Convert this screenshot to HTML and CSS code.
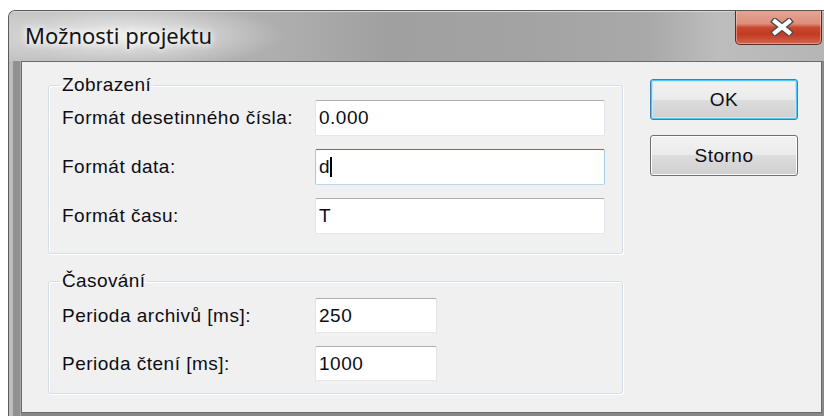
FILE: index.html
```html
<!DOCTYPE html>
<html lang="cs">
<head>
<meta charset="utf-8">
<title>Možnosti projektu</title>
<link rel="stylesheet" href="styles.css">
</head>
<body>
<div class="window">
  <div class="titlebar">
    <span class="title">Možnosti projektu</span>
    <button class="close" type="button" aria-label="Zavřít">
      <svg width="24" height="18" viewBox="0 0 24 18" aria-hidden="true">
        <path d="M5 3.5 L19 14.5 M19 3.5 L5 14.5" stroke="#4d4d4d" stroke-width="7" stroke-linecap="square" fill="none"/>
        <path d="M5 3.5 L19 14.5 M19 3.5 L5 14.5" stroke="#ffffff" stroke-width="4.2" stroke-linecap="square" fill="none"/>
      </svg>
    </button>
  </div>
  <div class="client">
    <div class="groups">
      <fieldset class="group group-display">
        <legend>Zobrazení</legend>
        <div class="row"><span class="label">Formát desetinného čísla:</span><span class="field field-wide">0.000</span></div>
        <div class="row"><span class="label">Formát data:</span><span class="field field-wide field-focus">d<span class="caret"></span></span></div>
        <div class="row"><span class="label">Formát času:</span><span class="field field-wide">T</span></div>
      </fieldset>
      <fieldset class="group group-timing">
        <legend>Časování</legend>
        <div class="row"><span class="label">Perioda archivů [ms]:</span><span class="field field-short">250</span></div>
        <div class="row"><span class="label">Perioda čtení [ms]:</span><span class="field field-short">1000</span></div>
      </fieldset>
    </div>
    <div class="buttons">
      <button class="btn btn-default" type="button">OK</button>
      <button class="btn" type="button">Storno</button>
    </div>
  </div>
</div>
</body>
</html>
```
FILE: styles.css
```css
* {
  box-sizing: border-box;
}

html,
body {
  margin: 0;
}

body {
  width: 824px;
  height: 416px;
  overflow: hidden;
  background: #ffffff;
  font-family: "Liberation Sans", Arial, sans-serif;
  color: #0d0d14;
}

/* window frame */
.window {
  margin: 10px 0 0 8px;
  width: 818px;
  height: 410px;
  border-top: 1px solid #5a5a5a;
  border-left: 1px solid #5a5a5a;
  border-top-left-radius: 7px;
  overflow: hidden;
  display: flex;
  flex-direction: column;
  background:
    linear-gradient(to right, #bdbdbd 0, #bdbdbd 4px, #919191 4px, #919191 11px, #a9a9a9 11px, #a9a9a9 12px, transparent 12px) no-repeat,
    #878787;
}

.titlebar {
  height: 50px;
  flex: none;
  display: flex;
  align-items: flex-start;
  background:
    radial-gradient(ellipse 160px 34px at 115px 24px, rgba(240, 240, 240, 0.95), rgba(240, 240, 240, 0) 100%),
    linear-gradient(to right, #c4c4c4 0, #bcbcbc 40px, #adadad 280px, #a0a0a0 380px, #a3a3a3 520px, #a9a9a9 640px, #bdbdbd 710px, #b5b5b5 820px);
  box-shadow: inset 0 1px 0 #d6d6d6;
}

.title {
  padding: 13px 0 0 16px;
  font-family: "Noto Sans", "Open Sans", sans-serif;
  font-size: 22px;
  line-height: 22px;
  color: #141414;
  text-shadow: 0 0 6px #ffffff, 0 0 10px #ffffff;
}

.close {
  margin: -1px 4px 0 auto;
  width: 87px;
  height: 35px;
  padding: 0 0 0 7px;
  border: 1px solid #5f2a22;
  border-top: 0;
  border-radius: 0 0 5px 5px;
  display: flex;
  align-items: center;
  justify-content: center;
  background: linear-gradient(#e6a595 0%, #dd8f7c 40%, #c9462e 52%, #c23b22 72%, #d26650 100%);
  box-shadow: inset 0 0 0 1px rgba(255, 220, 210, 0.45);
}

/* dialog body */
.client {
  margin-left: 12px;
  width: 801px;
  height: 352px;
  border: 1px solid #6a6a6a;
  background: #f0f0f0;
  display: flex;
  align-items: flex-start;
  gap: 27px;
  padding-left: 26px;
}

.groups {
  width: 575px;
  padding-top: 13px;
  display: flex;
  flex-direction: column;
  gap: 17px;
}

.group {
  margin: 0;
  min-width: 0;
  border: 1px solid #d5dfe5;
  border-radius: 3px;
  box-shadow: inset 1px 1px 0 #ffffff, 1px 1px 0 #ffffff;
}

.group-display {
  padding: 5px 17px 19px 13px;
}

.group-timing {
  padding: 7px 17px 12px 13px;
}

.group legend {
  padding: 0 2px;
  margin-left: -2px;
  font-size: 19px;
  line-height: 20px;
  letter-spacing: 0.4px;
}

.row {
  display: flex;
  align-items: center;
  margin-bottom: 13px;
  font-size: 19px;
  letter-spacing: 0.5px;
}

.row:last-child {
  margin-bottom: 0;
}

.label {
  width: 253px;
  flex: none;
}

.field {
  display: flex;
  align-items: center;
  height: 36px;
  padding-left: 3px;
  background: #ffffff;
  border: 1px solid;
  border-color: #abadb3 #e2e3ea #e3e9ef;
  border-radius: 2px;
}

.field-wide {
  width: 290px;
}

.field-short {
  width: 122px;
  height: 35px;
}

.field-focus {
  border-color: #3d7bad #a4c9e3 #b7d9ed;
}

.caret {
  width: 2px;
  height: 20px;
  background: #000000;
}

.buttons {
  width: 148px;
  padding-top: 17px;
  display: flex;
  flex-direction: column;
  gap: 15px;
}

.btn {
  height: 41px;
  padding: 0;
  font-family: "Liberation Sans", Arial, sans-serif;
  font-size: 19px;
  letter-spacing: 0.5px;
  color: #0d0d14;
  border: 1px solid #707070;
  border-radius: 3px;
  background: linear-gradient(#f2f2f2 0%, #ebebeb 50%, #dddddd 50%, #cfcfcf 100%);
  box-shadow: inset 0 0 0 1px #fbfbfb;
}

.btn-default {
  border-color: #3c7fb1;
  box-shadow: inset 0 0 0 1px #4fc8f4, inset 0 0 0 2px #bfeafb;
}
```
